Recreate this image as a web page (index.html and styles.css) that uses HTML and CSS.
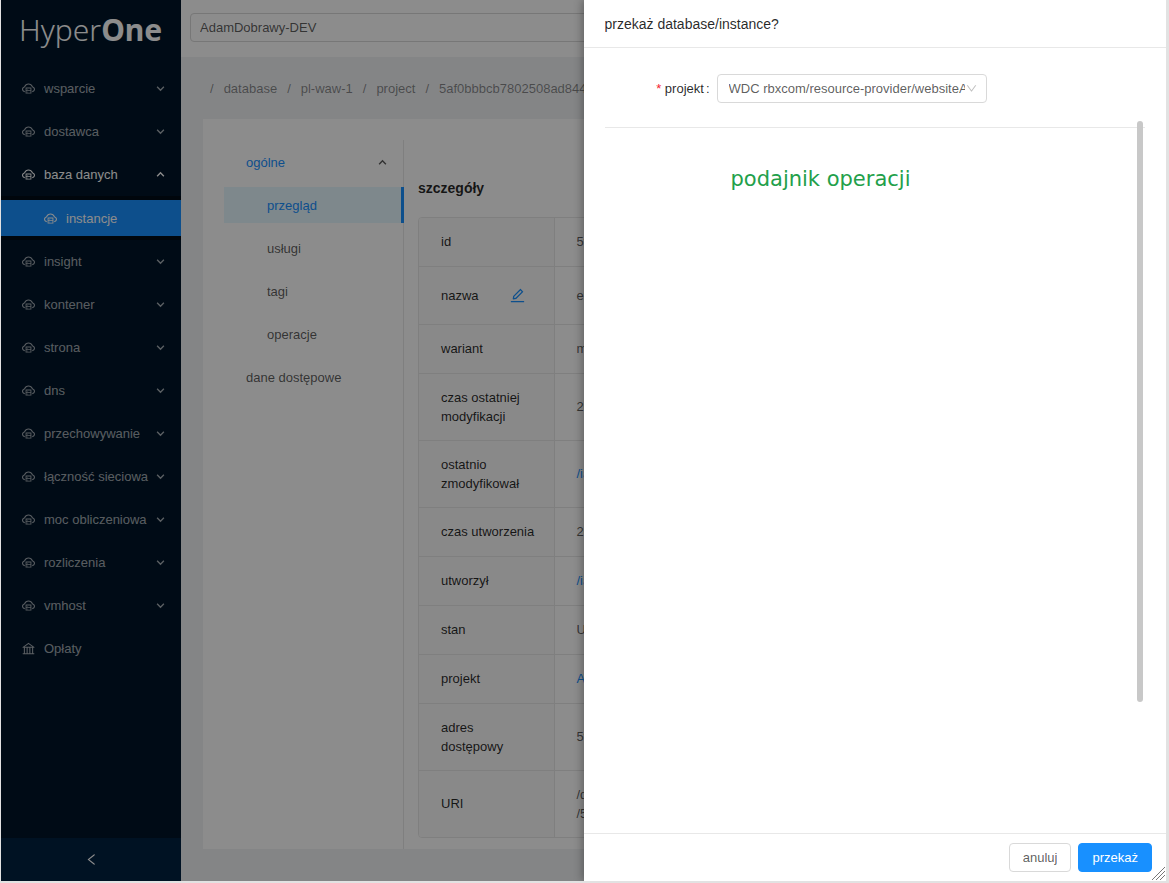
FILE: index.html
```html
<!DOCTYPE html>
<html lang="pl">
<head>
    <meta charset="UTF-8">
    <meta name="viewport" content="width=device-width, initial-scale=1.0">
    <title>HyperOne</title>
    <link rel="stylesheet" href="styles.css">
</head>
<body>
    <svg class="sprite" aria-hidden="true">
        <symbol id="cloud" viewBox="64 64 896 896">
            <path d="M704 446H320c-4.4 0-8 3.6-8 8v402c0 4.4 3.6 8 8 8h384c4.4 0 8-3.6 8-8V454c0-4.4-3.6-8-8-8zm-328 64h272v117H376V510zm272 290H376V683h272v117z"/>
            <path d="M424 748a32 32 0 1 0 64 0 32 32 0 1 0-64 0zm0-178a32 32 0 1 0 64 0 32 32 0 1 0-64 0z"/>
            <path d="M811.4 368.9C765.6 248 648.9 162 512.2 162S258.8 247.9 213 368.8C126.9 391.5 63.5 470.2 64 563.6 64.6 668 145.6 752.9 247.6 762c4.7.4 8.7-3.3 8.7-8v-60.4c0-4-3-7.4-7-7.9-27-3.4-52.5-15.2-72.1-34.5-24-23.5-37.2-55.1-37.2-88.6 0-28 9.1-54.4 26.2-76.4 16.7-21.4 40.2-36.9 66.1-43.7l37.9-10 13.9-36.7c8.6-22.8 20.6-44.2 35.7-63.5 14.9-19.2 32.6-36 52.4-50 41.1-28.9 89.5-44.2 140-44.2s98.9 15.3 140 44.3c19.9 14 37.5 30.8 52.4 50 15.1 19.3 27.1 40.7 35.7 63.5l13.8 36.6 37.8 10c54.2 14.4 92.1 63.7 92.1 120 0 33.6-13.2 65.1-37.2 88.6-19.5 19.2-44.9 31.1-71.9 34.5-4 .5-6.9 3.9-6.9 7.9V754c0 4.7 4.1 8.4 8.8 8 101.7-9.2 182.5-94 183.2-198.2.6-93.4-62.7-172.1-148.6-194.9z"/>
        </symbol>
        <symbol id="bank" viewBox="64 64 896 896">
            <path d="M894 462c30.9 0 43.8-39.7 18.7-58L530.8 126.2a31.81 31.81 0 0 0-37.6 0L111.3 404c-25.1 18.2-12.2 58 18.8 58H192v374h-72c-4.4 0-8 3.6-8 8v52c0 4.4 3.6 8 8 8h784c4.4 0 8-3.6 8-8v-52c0-4.4-3.6-8-8-8h-72V462h62zM512 196.7l271.1 197.2H240.9L512 196.7zM264 462h117v374H264V462zm189 0h117v374H453V462zm307 374H642V462h118v374z"/>
        </symbol>
        <symbol id="edit" viewBox="64 64 896 896">
            <path d="M257.7 752c2 0 4-.2 6-.5L431.9 722c2-.4 3.9-1.3 5.3-2.8l423.9-423.9a9.96 9.96 0 0 0 0-14.1L694.9 114.9c-1.9-1.9-4.4-2.9-7.1-2.9s-5.2 1-7.1 2.9L256.8 538.8c-1.5 1.5-2.4 3.3-2.8 5.3l-29.5 168.2a33.5 33.5 0 0 0 9.4 29.8c6.6 6.4 14.9 9.9 23.8 9.9zm67.4-174.4L687.8 215l73.3 73.3-362.7 362.6-88.9 15.7 15.6-89zM880 836H144c-17.7 0-32 14.3-32 32v36c0 4.4 3.6 8 8 8h784c4.4 0 8-3.6 8-8v-36c0-17.7-14.3-32-32-32z"/>
        </symbol>
        <symbol id="left" viewBox="64 64 896 896">
            <path d="M724 218.3V141c0-6.7-7.7-10.4-12.9-6.3L260.3 486.8a31.86 31.86 0 0 0 0 50.3l450.8 352.1c5.3 4.1 12.9.4 12.9-6.3v-77.3c0-4.9-2.3-9.6-6.1-12.6l-360-281 360-281.1c3.8-3 6.1-7.7 6.1-12.6z"/>
        </symbol>
        <symbol id="down" viewBox="64 64 896 896">
            <path d="M884 256h-75c-5.1 0-9.9 2.5-12.9 6.6L512 654.2 227.9 262.6c-3-4.1-7.8-6.6-12.9-6.6h-75c-6.5 0-10.3 7.4-6.5 12.7l352.6 486.1c12.8 17.6 39 17.6 51.7 0l352.6-486.1c3.9-5.3.1-12.7-6.4-12.7z"/>
        </symbol>
        <symbol id="chevron" viewBox="0 0 8 8">
            <path d="M1 2.5l3 3 3-3" fill="none" stroke="currentColor" stroke-width="1.2"/>
        </symbol>
    </svg>

    <div class="app">
        <aside class="sider">
            <a class="logo" href="#">Hyper<b>One</b></a>
            <ul class="nav">
                <li><a href="#"><svg class="icon"><use href="#cloud"/></svg><span>wsparcie</span><svg class="arrow"><use href="#chevron"/></svg></a></li>
                <li><a href="#"><svg class="icon"><use href="#cloud"/></svg><span>dostawca</span><svg class="arrow"><use href="#chevron"/></svg></a></li>
                <li class="open">
                    <a href="#"><svg class="icon"><use href="#cloud"/></svg><span>baza danych</span><svg class="arrow"><use href="#chevron"/></svg></a>
                    <ul class="subnav">
                        <li><a href="#"><svg class="icon"><use href="#cloud"/></svg><span>instancje</span></a></li>
                    </ul>
                </li>
                <li><a href="#"><svg class="icon"><use href="#cloud"/></svg><span>insight</span><svg class="arrow"><use href="#chevron"/></svg></a></li>
                <li><a href="#"><svg class="icon"><use href="#cloud"/></svg><span>kontener</span><svg class="arrow"><use href="#chevron"/></svg></a></li>
                <li><a href="#"><svg class="icon"><use href="#cloud"/></svg><span>strona</span><svg class="arrow"><use href="#chevron"/></svg></a></li>
                <li><a href="#"><svg class="icon"><use href="#cloud"/></svg><span>dns</span><svg class="arrow"><use href="#chevron"/></svg></a></li>
                <li><a href="#"><svg class="icon"><use href="#cloud"/></svg><span>przechowywanie</span><svg class="arrow"><use href="#chevron"/></svg></a></li>
                <li><a href="#"><svg class="icon"><use href="#cloud"/></svg><span>łączność sieciowa</span><svg class="arrow"><use href="#chevron"/></svg></a></li>
                <li><a href="#"><svg class="icon"><use href="#cloud"/></svg><span>moc obliczeniowa</span><svg class="arrow"><use href="#chevron"/></svg></a></li>
                <li><a href="#"><svg class="icon"><use href="#cloud"/></svg><span>rozliczenia</span><svg class="arrow"><use href="#chevron"/></svg></a></li>
                <li><a href="#"><svg class="icon"><use href="#cloud"/></svg><span>vmhost</span><svg class="arrow"><use href="#chevron"/></svg></a></li>
                <li><a href="#"><svg class="icon"><use href="#bank"/></svg><span>Opłaty</span></a></li>
            </ul>
            <button class="collapse" type="button" aria-label="zwiń menu"><svg class="icon"><use href="#left"/></svg></button>
        </aside>

        <div class="page">
            <header class="topbar">
                <input class="project" type="text" value="AdamDobrawy-DEV" aria-label="projekt">
            </header>
            <nav class="breadcrumb">
                <span>/</span><a href="#">database</a>
                <span>/</span><a href="#">pl-waw-1</a>
                <span>/</span><a href="#">project</a>
                <span>/</span><a href="#">5af0bbbcb7802508ad844caa</a>
            </nav>
            <main class="card">
                <ul class="side-menu">
                    <li><a class="group" href="#">ogólne<svg class="arrow"><use href="#chevron"/></svg></a></li>
                    <li><a class="sub selected" href="#">przegląd</a></li>
                    <li><a class="sub" href="#">usługi</a></li>
                    <li><a class="sub" href="#">tagi</a></li>
                    <li><a class="sub" href="#">operacje</a></li>
                    <li><a href="#">dane dostępowe</a></li>
                </ul>
                <section class="details">
                    <h2>szczegóły</h2>
                    <div class="table-box">
                        <table>
                            <tr><th>id</th><td>5f</td></tr>
                            <tr class="editable"><th><div class="name">nazwa<button class="edit" type="button" aria-label="edytuj"><svg class="icon"><use href="#edit"/></svg></button></div></th><td>ex</td></tr>
                            <tr><th>wariant</th><td>m</td></tr>
                            <tr><th>czas ostatniej modyfikacji</th><td>20</td></tr>
                            <tr><th>ostatnio zmodyfikował</th><td><a href="#">/iam</a></td></tr>
                            <tr><th>czas utworzenia</th><td>20</td></tr>
                            <tr><th>utworzył</th><td><a href="#">/iam</a></td></tr>
                            <tr><th>stan</th><td>U</td></tr>
                            <tr><th>projekt</th><td><a href="#">AdamDobrawy-DEV</a></td></tr>
                            <tr><th>adres dostępowy</th><td>5f</td></tr>
                            <tr><th>URI</th><td>/database<br>/5f</td></tr>
                        </table>
                    </div>
                </section>
            </main>
        </div>

        <div class="mask"></div>

        <form class="drawer">
            <h1 class="drawer-title">przekaż database/instance?</h1>
            <div class="drawer-body">
                <div class="field">
                    <label for="target"><span class="required">*</span> projekt<span class="colon">:</span></label>
                    <div class="select">
                        <select id="target">
                            <option>WDC rbxcom/resource-provider/websiteAccount</option>
                        </select>
                        <svg class="icon"><use href="#down"/></svg>
                    </div>
                </div>
                <hr>
                <p class="feed">podajnik operacji</p>
                <div class="scroll-thumb"></div>
            </div>
            <footer class="drawer-footer">
                <button class="btn" type="button">anuluj</button>
                <button class="btn primary" type="button">przekaż</button>
            </footer>
            <svg class="grip" viewBox="0 0 13 13"><path d="M0 13L13 0M4 13L13 4M8 13L13 8" fill="none" stroke="#777"/></svg>
        </form>
    </div>
</body>
</html>
```
FILE: styles.css
```css
* {
    box-sizing: border-box;
}
body {
    margin: 0;
    padding: 0 3px 2px 1px;
    background: #e2e2e2;
    font-family: "Liberation Sans", Arial, sans-serif;
    font-size: 13px;
    line-height: 19px;
    color: rgba(0, 0, 0, 0.65);
}
ul {
    list-style: none;
    margin: 0;
    padding: 0;
}
a {
    color: #1890ff;
    text-decoration: none;
}
button, input, select {
    font: inherit;
    color: inherit;
}
.sprite {
    display: none;
}
.icon {
    width: 13px;
    height: 13px;
    fill: currentColor;
    flex: none;
}
.arrow {
    width: 9px;
    height: 9px;
    flex: none;
    margin-left: auto;
}
.app {
    position: relative;
    display: flex;
    min-height: calc(100vh - 2px);
    overflow: hidden;
}

/* left navigation */
.sider {
    width: 180px;
    flex: none;
    display: flex;
    flex-direction: column;
    background: #001529;
}
.logo {
    height: 67px;
    padding: 10px 0 0 18px;
    font-family: "Noto Sans", sans-serif;
    font-size: 30px;
    font-weight: 300;
    line-height: 40px;
    color: #fff;
}
.logo b {
    font-weight: 700;
}
.nav {
    flex: 1;
}
.nav a {
    display: flex;
    align-items: center;
    height: 43px;
    padding: 0 16px 0 21px;
    color: rgba(255, 255, 255, 0.65);
}
.nav span {
    margin-left: 9px;
    white-space: nowrap;
}
.nav .open > a {
    color: #fff;
}
.open > a .arrow,
.group .arrow {
    transform: rotate(180deg);
}
.subnav {
    padding: 4px 0;
    background: #000c17;
}
.nav .subnav a {
    height: 36px;
    padding-left: 43px;
    background: #1890ff;
    color: #fff;
}
.collapse {
    height: 43px;
    border: none;
    background: #002140;
    color: #fff;
    display: flex;
    align-items: center;
    justify-content: center;
}

/* page under the mask */
.page {
    flex: 1;
    min-width: 0;
    background: #f0f2f5;
    padding-bottom: 32px;
}
.topbar {
    height: 57px;
    padding: 13px 9px;
    background: #fff;
}
.project {
    width: 100%;
    height: 29px;
    padding: 0 9px;
    border: 1px solid #d9d9d9;
    border-radius: 4px;
    background: #fff;
}
.breadcrumb {
    display: flex;
    gap: 10px;
    padding: 22px 29px 21px;
    color: rgba(0, 0, 0, 0.45);
}
.breadcrumb a {
    color: inherit;
}
.card {
    display: flex;
    margin: 0 22px;
    padding: 21px 21px 0;
    background: #fff;
}
.side-menu {
    width: 180px;
    flex: none;
    border-right: 1px solid #e8e8e8;
    padding-top: 4px;
}
.side-menu a {
    display: flex;
    align-items: center;
    height: 36px;
    margin: 0 -1px 7px 0;
    padding: 0 17px 0 22px;
    color: rgba(0, 0, 0, 0.65);
}
.side-menu .group {
    color: #1890ff;
}
.group .arrow {
    color: rgba(0, 0, 0, 0.65);
}
.side-menu .sub {
    padding-left: 43px;
}
.side-menu .selected {
    background: #e6f7ff;
    border-right: 3px solid #1890ff;
    color: #1890ff;
}
.details {
    flex: 1;
    min-width: 0;
    padding: 38px 0 11px 14px;
}
.details h2 {
    margin: 0 0 19px;
    font-size: 14px;
    line-height: 20px;
    color: rgba(0, 0, 0, 0.85);
}
.table-box {
    border: 1px solid #e8e8e8;
    border-radius: 4px;
    overflow: hidden;
}
table {
    width: 100%;
    border-collapse: collapse;
}
th, td {
    height: 49px;
    padding: 14px 18px 14px 22px;
    text-align: left;
    border-bottom: 1px solid #e8e8e8;
}
th {
    width: 135px;
    background: #fafafa;
    border-right: 1px solid #e8e8e8;
    font-weight: 400;
    color: rgba(0, 0, 0, 0.85);
}
tr:first-child th, tr:first-child td {
    height: 48px;
}
tr:last-child th, tr:last-child td {
    border-bottom: none;
}
.editable th {
    height: 58px;
}
.name {
    display: flex;
    align-items: center;
    justify-content: space-between;
}
.edit {
    display: flex;
    padding: 0 11px;
    border: none;
    background: none;
    color: #1890ff;
}
.edit .icon {
    width: 15px;
    height: 15px;
}

.mask {
    position: absolute;
    inset: 0;
    background: rgba(0, 0, 0, 0.45);
}

/* drawer */
.drawer {
    position: absolute;
    top: 0;
    right: 0;
    bottom: 0;
    width: 50%;
    display: flex;
    flex-direction: column;
    background: #fff;
    box-shadow: -2px 0 8px rgba(0, 0, 0, 0.3);
}
.drawer-title {
    margin: 0;
    padding: 14px 21px 13px;
    border-bottom: 1px solid #e8e8e8;
    font-size: 14px;
    font-weight: 400;
    line-height: 20px;
    color: rgba(0, 0, 0, 0.85);
}
.drawer-body {
    position: relative;
    flex: 1;
    padding: 26px 21px;
}
.field {
    display: flex;
    align-items: center;
}
.field label {
    width: 112px;
    padding-right: 7px;
    text-align: right;
    color: rgba(0, 0, 0, 0.85);
}
.required {
    color: #f5222d;
}
.colon {
    margin-left: 2px;
}
.select {
    position: relative;
    width: 50%;
}
.select select {
    display: block;
    width: 100%;
    height: 29px;
    padding: 0 21px 0 11px;
    border: 1px solid #d9d9d9;
    border-radius: 4px;
    background: #fff;
    appearance: none;
}
.select .icon {
    position: absolute;
    top: 9px;
    right: 10px;
    width: 11px;
    height: 11px;
    color: rgba(0, 0, 0, 0.25);
}
.drawer hr {
    margin: 24px 0 36px;
    border: none;
    border-top: 1px solid #e8e8e8;
}
.feed {
    margin: 0;
    padding-left: 126px;
    font-family: "DejaVu Sans", sans-serif;
    font-size: 21px;
    line-height: 30px;
    color: #22a04a;
}
.scroll-thumb {
    position: absolute;
    top: 73px;
    right: 23px;
    width: 6px;
    height: 74%;
    border-radius: 3px;
    background: #c8c8c8;
}
.drawer-footer {
    display: flex;
    justify-content: flex-end;
    gap: 7px;
    padding: 9px 14px;
    border-top: 1px solid #e8e8e8;
}
.btn {
    height: 29px;
    padding: 0 13px;
    border: 1px solid #d9d9d9;
    border-radius: 4px;
    background: #fff;
}
.btn.primary {
    border-color: #1890ff;
    background: #1890ff;
    color: #fff;
}
.grip {
    position: absolute;
    right: 1px;
    bottom: 1px;
    width: 13px;
    height: 13px;
}
```
